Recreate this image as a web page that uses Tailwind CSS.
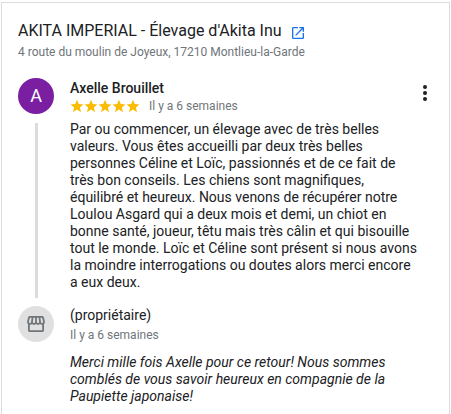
<!DOCTYPE html>
<html lang="fr">
<head>
<meta charset="utf-8">
<meta name="viewport" content="width=device-width, initial-scale=1">
<title>Avis – AKITA IMPERIAL</title>
<script src="https://cdn.jsdelivr.net/npm/@tailwindcss/browser@4"></script>
</head>
<body class="bg-white font-['Roboto',sans-serif] text-sm text-[#202124]">
<main class="mt-[2px] mr-px ml-px min-h-[calc(100vh-2px)] border-x border-t border-[#dadce0] px-4">
  <header class="pt-[18px]">
    <div class="flex items-center gap-[10px]">
      <h1 class="text-base leading-5">AKITA IMPERIAL - Élevage d'Akita Inu</h1>
      <a href="#" aria-label="Ouvrir la fiche" class="mt-[3px] block text-[#1a73e8]">
        <svg class="size-3" viewBox="3 3 18 18" fill="currentColor" aria-hidden="true"><path d="M19 19H5V5h7V3H5a2 2 0 0 0-2 2v14a2 2 0 0 0 2 2h14c1.100 0 2-.9 2-2v-7h-2v7zM14 3v2h3.590l-9.830 9.830 1.410 1.410L19 6.410V10h2V3h-7z"/></svg>
      </a>
    </div>
    <p class="mt-px text-xs leading-5 text-[#70757a]">4 route du moulin de Joyeux, 17210 Montlieu-la-Garde</p>
  </header>

  <article class="mt-4 flex gap-4">
    <div class="flex shrink-0 flex-col items-center">
      <div class="flex size-9 items-center justify-center rounded-full bg-[#7b1fa2] text-lg text-white">A</div>
      <div class="mt-[9px] mb-2 w-[3px] flex-1 bg-[#dadce0]"></div>
    </div>
    <div class="min-w-0 flex-1 pb-[15px]">
      <div class="flex items-start justify-between">
        <div>
          <h2 class="leading-5 font-medium">Axelle Brouillet</h2>
          <div class="flex items-center gap-[9px]">
            <div class="flex text-[#fbbc04]" role="img" aria-label="5 étoiles sur 5">
              <svg class="h-[14px] w-[70px]" viewBox="0 0 120 24" fill="currentColor" aria-hidden="true">
                <defs><path id="star" d="M12 18.200 18.800 22.500 17 14.600 23 9.300 15.100 8.600 12 1.300 8.900 8.600 1 9.300 7 14.600 5.200 22.500z"/></defs>
                <use href="#star"/><use href="#star" x="24"/><use href="#star" x="48"/><use href="#star" x="72"/><use href="#star" x="96"/>
              </svg>
            </div>
            <time class="text-xs leading-4 text-[#70757a]">Il y a 6 semaines</time>
          </div>
        </div>
        <button type="button" aria-label="Autres options" class="mt-[7px] mr-[6px] text-[#202124]">
          <svg class="h-4 w-1" viewBox="0 0 4 16" fill="currentColor" aria-hidden="true"><circle cx="2" cy="2" r="2"/><circle cx="2" cy="8" r="2"/><circle cx="2" cy="14" r="2"/></svg>
        </button>
      </div>
      <p class="mt-[7px] leading-[17px]">Par ou commencer, un élevage avec de très belles<br>valeurs. Vous êtes accueilli par deux très belles<br>personnes Céline et Loïc, passionnés et de ce fait de<br>très bon conseils. Les chiens sont magnifiques,<br>équilibré et heureux. Nous venons de récupérer notre<br>Loulou Asgard qui a deux mois et demi, un chiot en<br>bonne santé, joueur, têtu mais très câlin et qui bisouille<br>tout le monde. Loïc et Céline sont présent si nous avons<br>la moindre interrogations ou doutes alors merci encore<br>a eux deux.</p>
    </div>
  </article>

  <article class="flex gap-4">
    <div class="flex size-9 shrink-0 items-center justify-center rounded-full bg-[#e0e0e0] text-[#70757a]">
      <svg class="h-4 w-[18px]" viewBox="2 3 20 18" fill="currentColor" aria-hidden="true">
        <path d="M21.900 8.890l-1.050-4.370c-.22-.9-1-1.520-1.910-1.520H5.050c-.9 0-1.690.63-1.900 1.520L2.100 8.890c-.24 1.020-.02 2.060.62 2.880.08.11.19.19.28.29V19c0 1.100.9 2 2 2h14c1.100 0 2-.9 2-2v-6.940c.09-.09.2-.18.28-.28.64-.82.87-1.870.62-2.890zM18.910 4.990l1.050 4.370c.1.42.01.84-.25 1.170-.14.18-.44.47-.94.47-.61 0-1.140-.49-1.210-1.140L16.980 5l1.930-.01zM13 5h1.960l.54 4.520c.05.39-.07.78-.33 1.070-.22.26-.54.41-.95.41-.67 0-1.220-.59-1.220-1.310V5zM8.490 9.520L9.040 5H11v4.690c0 .72-.55 1.310-1.290 1.310-.34 0-.65-.15-.89-.41-.25-.29-.37-.68-.33-1.070zM4.040 9.360L5.050 5h1.970l-.58 4.860c-.08.65-.6 1.140-1.210 1.140-.49 0-.8-.29-.93-.47-.27-.32-.36-.75-.26-1.170zM5 19v-6.030c.08.01.15.03.23.03.87 0 1.660-.36 2.240-.95.6.6 1.400.95 2.310.95.87 0 1.650-.36 2.230-.93.59.57 1.390.93 2.290.93.84 0 1.640-.35 2.240-.95.58.59 1.370.95 2.240.95.08 0 .15-.02.23-.03V19H5z"/>
      </svg>
    </div>
    <div class="min-w-0 flex-1 pt-px">
      <h2 class="leading-[17px]">(propriétaire)</h2>
      <time class="mt-[3px] block text-xs leading-4 text-[#70757a]">Il y a 6 semaines</time>
      <p class="mt-[11px] leading-[17px] italic">Merci mille fois Axelle pour ce retour! Nous sommes<br>comblés de vous savoir heureux en compagnie de la<br>Paupiette japonaise!</p>
    </div>
  </article>
</main>
</body>
</html>
